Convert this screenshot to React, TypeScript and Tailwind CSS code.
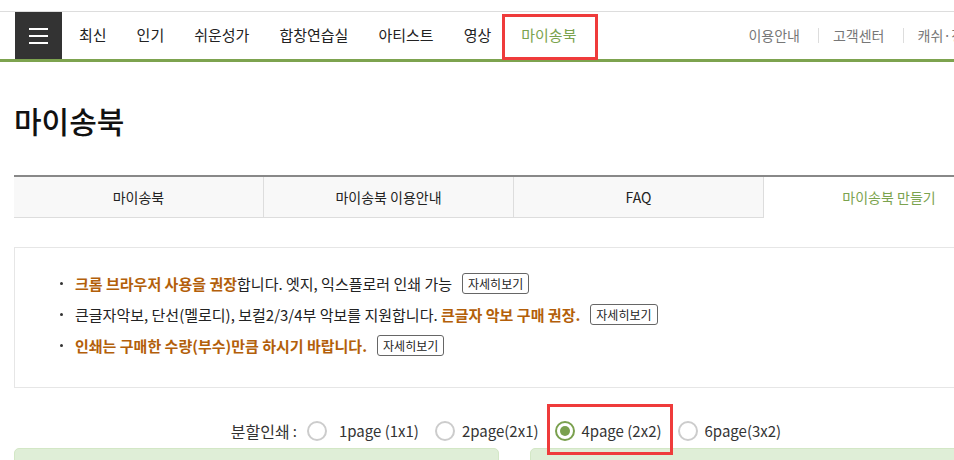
import React from 'react';

const navItems = ['최신', '인기', '쉬운성가', '합창연습실', '아티스트', '영상'];
const tabs = ['마이송북', '마이송북 이용안내', 'FAQ'];
const layouts = [
    { label: '1page (1x1)', checked: false },
    { label: '2page(2x1)', checked: false },
    { label: '4page (2x2)', checked: true },
    { label: '6page(3x2)', checked: false },
];

const DetailButton = () => (
    <button className="ml-[10px] inline-flex h-[21px] items-center rounded-[3px] border border-[#666] bg-white px-[5px] text-[12px] leading-[19px] text-[#222]">
        자세히보기
    </button>
);

const Bullet = () => <span className="mr-[12px] h-[3px] w-[3px] shrink-0 rounded-full bg-[#333]" />;

const Radio = ({ checked }: { checked: boolean }) =>
    checked ? (
        <span className="flex h-[20px] w-[20px] items-center justify-center rounded-full border-2 border-[#7aa04e] bg-white">
            <span className="h-[10px] w-[10px] rounded-full bg-[#7aa04e]" />
        </span>
    ) : (
        <span className="h-[20px] w-[20px] rounded-full border-2 border-[#ccc] bg-white" />
    );

export default function App() {
    return (
        <div className="h-[460px] w-full overflow-hidden bg-white font-['Noto_Sans_CJK_KR',sans-serif] text-[#222]">
            <div className="h-[12px] border-b border-[#ddd]" />

            {/* top nav */}
            <div className="flex h-[50px] w-[1100px] border-b-[3px] border-[#7da34f]">
                <div className="ml-[15px] mr-[2px] flex w-[47px] flex-col items-center justify-center gap-[5px] bg-[#333]">
                    <span className="h-[2px] w-[19px] bg-white" />
                    <span className="h-[2px] w-[19px] bg-white" />
                    <span className="h-[2px] w-[19px] bg-white" />
                </div>
                {navItems.map((item) => (
                    <a key={item} className="flex items-center px-[15px] text-[15px] text-[#222]">
                        {item}
                    </a>
                ))}
                <a className="relative flex items-center px-[15px] text-[15px] text-[#7ba34e]">
                    마이송북
                    <span className="absolute -left-[4px] -right-[7px] top-[2px] -bottom-[1px] border-[3px] border-[#ef3b3b]" />
                </a>
                <div className="ml-[157px] flex items-center text-[14px] text-[#777]">
                    <span className="pr-[18px]">이용안내</span>
                    <span className="h-[15px] w-px bg-[#ddd]" />
                    <span className="pl-[14px] pr-[18px]">고객센터</span>
                    <span className="h-[15px] w-px bg-[#ddd]" />
                    <span className="pl-[14px]">캐쉬·정산</span>
                </div>
            </div>

            <h1 className="ml-[14px] mt-[38px] text-[30px] font-medium leading-[40px] text-[#111]">마이송북</h1>

            {/* tabs */}
            <div className="ml-[14px] mt-[35px] flex w-[1000px] border-t-2 border-[#888]">
                {tabs.map((tab) => (
                    <div
                        key={tab}
                        className="flex h-[41px] w-[250px] items-center justify-center border-b border-r border-[#ddd] bg-[#f8f8f8] text-[14px] text-[#222]"
                    >
                        {tab}
                    </div>
                ))}
                <div className="flex h-[41px] w-[250px] items-center justify-center bg-white text-[14px] text-[#7ba34e]">
                    마이송북 만들기
                </div>
            </div>

            {/* notice */}
            <div className="ml-[14px] mt-[29px] w-[1000px] border border-[#e6e6e6] pb-[26px] pl-[45px] pt-[20px] text-[15px] leading-[31px]">
                <div className="flex items-center">
                    <Bullet />
                    <span>
                        <b className="font-bold text-[#b35f0a]">크롬 브라우저 사용을 권장</b>합니다. 엣지, 익스플로러 인쇄 가능
                    </span>
                    <DetailButton />
                </div>
                <div className="flex items-center">
                    <Bullet />
                    <span>
                        큰글자악보, 단선(멜로디), 보컬2/3/4부 악보를 지원합니다.{' '}
                        <b className="font-bold text-[#b35f0a]">큰글자 악보 구매 권장.</b>
                    </span>
                    <DetailButton />
                </div>
                <div className="flex items-center">
                    <Bullet />
                    <b className="font-bold text-[#b35f0a]">인쇄는 구매한 수량(부수)만큼 하시기 바랍니다.</b>
                    <DetailButton />
                </div>
            </div>

            {/* split print options */}
            <div className="ml-[14px] mt-[28px] flex h-[30px] w-[1000px] items-center justify-center text-[15px] text-[#333]">
                <span className="text-[16px]">분할인쇄</span>
                <span className="ml-[3px] mr-[10px]">:</span>
                {layouts.map((l, i) => (
                    <label key={l.label} className="relative mr-[16px] flex items-center gap-[7px]">
                        <Radio checked={l.checked} />
                        <span className={i === 0 ? 'ml-[5px]' : ''}>{l.label}</span>
                        {l.checked && (
                            <span className="absolute -bottom-[13px] -left-[8px] -right-[11px] -top-[16px] z-10 border-[3px] border-[#ef3b3b]" />
                        )}
                    </label>
                ))}
            </div>

            <div className="ml-[14px] mt-[2px] grid w-[1000px] grid-cols-2 gap-[31px]">
                <div className="h-[60px] rounded-t-[5px] border border-[#d3e7c6] bg-[#dfeed7]" />
                <div className="h-[60px] rounded-t-[5px] border border-[#d3e7c6] bg-[#dfeed7]" />
            </div>
        </div>
    );
}
